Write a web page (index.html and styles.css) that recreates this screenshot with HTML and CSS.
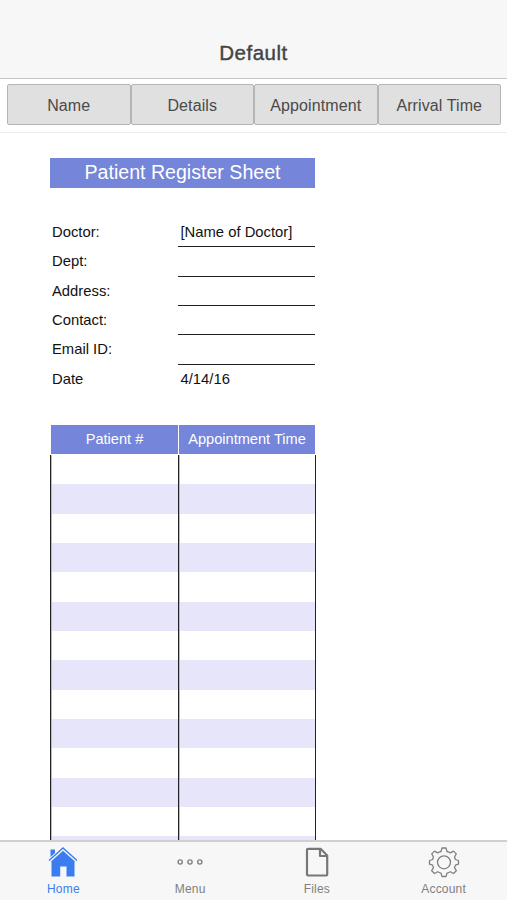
FILE: index.html
```html
<!DOCTYPE html>
<html lang="en">
<head>
    <meta charset="UTF-8">
    <meta name="viewport" content="width=device-width, initial-scale=1.0">
    <title>Patient Register Sheet</title>
    <link rel="stylesheet" href="styles.css">
</head>
<body>
    <header class="header">
        <h1>Default</h1>
    </header>

    <div class="toolbar">
        <button>Name</button>
        <button>Details</button>
        <button>Appointment</button>
        <button>Arrival Time</button>
    </div>

    <main class="sheet">
        <h2 class="sheet-title">Patient Register Sheet</h2>

        <div class="info">
            <div class="row"><span class="label">Doctor:</span><span class="value">[Name of Doctor]</span></div>
            <div class="row"><span class="label">Dept:</span><span class="value"></span></div>
            <div class="row"><span class="label">Address:</span><span class="value"></span></div>
            <div class="row"><span class="label">Contact:</span><span class="value"></span></div>
            <div class="row"><span class="label">Email ID:</span><span class="value"></span></div>
            <div class="row"><span class="label">Date</span><span class="value date">4/14/16</span></div>
        </div>

        <div class="table-head">
            <div>Patient #</div>
            <div>Appointment Time</div>
        </div>
        <div class="table-body">
            <div class="col"></div>
            <div class="col"></div>
        </div>
    </main>

    <nav class="tabs">
        <a class="tab active">
            <svg width="30" height="32" viewBox="0 0 30 32">
                <path d="M2.500 11V3.500H7V7z" fill="#3b7df0"/>
                <path d="M1 14.500L15 2L29 14.500" fill="none" stroke="#3b7df0" stroke-width="1.400"/>
                <path d="M3 15.500L15 4.800L27 15.500L26.500 16V30.500H18.500V20.500H12.200V30.500H3.500V16z" fill="#3b7df0"/>
            </svg>
            <span>Home</span>
        </a>
        <a class="tab">
            <svg width="30" height="32" viewBox="0 0 30 32" fill="none" stroke="#808080" stroke-width="1.400">
                <circle cx="5.200" cy="16" r="2.100"/>
                <circle cx="15" cy="16" r="2.100"/>
                <circle cx="24.800" cy="16" r="2.100"/>
            </svg>
            <span>Menu</span>
        </a>
        <a class="tab">
            <svg width="30" height="32" viewBox="0 0 30 32" fill="none" stroke="#777" stroke-width="2.200" stroke-linejoin="round">
                <path d="M6 2.800H18.500L25.200 9.500V28.500Q25.200 29.500 24.200 29.500H6Q5 29.500 5 28.500V3.800Q5 2.800 6 2.800z"/>
                <path d="M18 3V10H25"/>
            </svg>
            <span>Files</span>
        </a>
        <a class="tab">
            <svg width="32" height="32" viewBox="0 0 32 32" fill="none" stroke="#808080" stroke-width="1.300" stroke-linejoin="round">
                <path d="M14 2H18L19 5.500Q21 6 22.300 6.900L25.500 5.100L28.300 7.900L26.500 11Q27 12.300 27.400 13.500L30.500 14.500V18.200L27.400 19.100Q27 20.500 26.500 21.600L28.300 24.700L25.500 27.500L22.300 25.700Q21 26.600 19 27.100L18 30.500H14L13 27.100Q11 26.600 9.700 25.700L6.500 27.500L3.700 24.700L5.500 21.600Q5 20.500 4.600 19.100L1.500 18.200V14.500L4.600 13.500Q5 12.300 5.500 11L3.700 7.900L6.500 5.100L9.700 6.900Q11 6 13 5.500z"/>
                <circle cx="16" cy="16.300" r="6.500"/>
            </svg>
            <span>Account</span>
        </a>
    </nav>
</body>
</html>
```
FILE: styles.css
```css
*{
    margin:0;
    padding:0;
    box-sizing: border-box;
}
body{
    height:100vh;
    display: flex;
    flex-direction: column;
    overflow: hidden;
    background:#fff;
    color:#111;
    font-family: "Liberation Sans", Arial, sans-serif;
    font-size:14.8px;
}
.header{
    height:79px;
    flex:none;
    padding-top:40px;
    background:#f7f7f7;
    border-bottom: 1px solid #c4c4c4;
    text-align: center;
}
.header h1{
    font-size:20.5px;
    line-height:25px;
    font-weight:400;
    letter-spacing: 0.5px;
    color:#444;
    -webkit-text-stroke: 0.4px #444;
}
.toolbar{
    height:54px;
    flex:none;
    display: flex;
    padding:5px 6px 7px 7px;
    border-bottom: 1px solid #ececec;
}
.toolbar button{
    flex:1;
    padding-top:2px;
    background:#e0e0e0;
    border:1px solid #b5b5b5;
    border-radius: 2px;
    font-family: inherit;
    font-size:16px;
    letter-spacing: 0.1px;
    color:#4a4a4a;
}
.sheet{
    flex:1;
    min-height:0;
    width:266px;
    margin-left:50px;
    padding-top:25px;
    display: flex;
    flex-direction: column;
}
.sheet-title{
    width:265px;
    height:30px;
    flex:none;
    background:#7485da;
    color:#fff;
    font-size:19.6px;
    font-weight:400;
    line-height:29px;
    text-align: center;
}
.info{
    margin-top:30px;
    flex:none;
}
.row{
    display: flex;
    height:29.33px;
    line-height:28px;
}
.label{
    width:128px;
    padding-left:2px;
}
.value{
    width:137px;
    padding-left:2.5px;
    border-bottom: 1.5px solid #222;
}
.date{
    border:0;
    line-height:29px;
}
.table-head{
    flex:none;
    display: grid;
    grid-template-columns: 127px 136px;
    gap:1px;
    height:29px;
    margin:31px 0 0 1px;
    font-size:14.6px;
    line-height:29px;
    text-align: center;
    color:#fff;
}
.table-head div{
    background:#7485da;
}
.table-body{
    flex:1;
    min-height:0;
    display: grid;
    grid-template-columns: 128px 138px;
    margin-top:1px;
}
.col{
    border-left: 1px solid #222;
    background:repeating-linear-gradient(#fff 0 29.33px, #e6e5f9 29.33px 58.67px);
    box-shadow: inset 1px 0 #bbb;
}
.col:last-child{
    border-right: 1px solid #222;
}
.tabs{
    height:60px;
    flex:none;
    display: flex;
    background:#f7f7f7;
    border-top: 2px solid #d0d0d0;
}
.tab{
    flex:1;
    display: flex;
    flex-direction: column;
    align-items: center;
    padding-top:4px;
    font-size:12px;
    letter-spacing: 0.2px;
    line-height:15px;
    color:#808080;
}
.tab span{
    margin-top:4px;
}
.active{
    color:#3b7df0;
}
```
